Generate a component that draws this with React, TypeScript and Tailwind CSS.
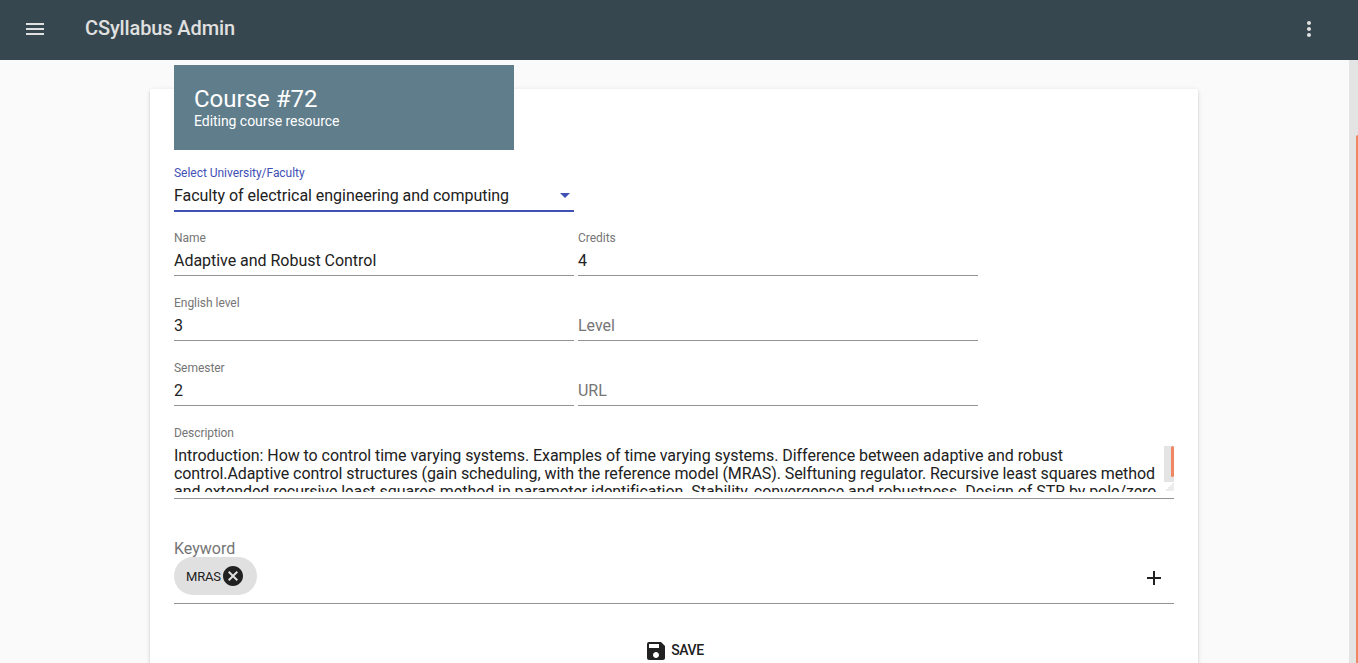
import type { ReactNode } from 'react';
import { MdAdd, MdCancel, MdMenu, MdMoreVert, MdSave } from 'react-icons/md';

const intro =
  'Introduction: How to control time varying systems. Examples of time varying systems. Difference between adaptive and robust ';
const topics =
  'control.Adaptive control structures (gain scheduling, with the reference model (MRAS). Selftuning regulator. Recursive least squares method ';
const methods =
  'and extended recursive least squares method in parameter identification. Stability, convergence and robustness. Design of STR by pole/zero';

type FieldProps = { label: string; value?: string; active?: boolean; children?: ReactNode };

function Field({ label, value, active = false, children }: FieldProps) {
  return (
    <div className="h-[65px] w-[400px] pt-[15px]">
      <div
        className={`h-[21px] text-xs leading-4 tracking-[-0.035px] ${active ? 'text-[#3f51b5]' : 'text-[#757575]'}`}
      >
        {value ? label : ''}
      </div>
      <div
        className={`flex h-6 items-start justify-between text-base leading-[19px] tracking-[-0.03px] ${value ? 'text-[#212121]' : 'text-[#757575]'}`}
      >
        <span>{value ?? label}</span>
        {children}
      </div>
      <div className={active ? 'h-0.5 bg-[#3f51b5]' : 'h-px bg-[#949494]'} />
    </div>
  );
}

function Header() {
  return (
    <header className="flex h-[60px] shrink-0 items-center bg-[#37474f] text-[#e0e0e0]">
      <MdMenu className="mr-[38px] ml-[23px] size-6 translate-y-[-1px]" />
      <h1 className="grow pb-1 text-xl leading-6 font-medium tracking-[-0.12px]">CSyllabus Admin</h1>
      <MdMoreVert className="mr-[37px] size-6 translate-y-[-1px]" />
    </header>
  );
}

export default function App() {
  return (
    <div className="flex h-[663px] w-[1358px] flex-col overflow-hidden bg-[#fafafa] font-[Roboto,sans-serif]">
      <Header />
      <div className="flex min-h-0 grow">
        <main className="grow pt-[29px] pl-[150px]">
          <section className="flow-root h-[640px] w-[1048px] rounded-xs bg-white px-6 shadow-[0_3px_1px_-2px_rgba(0,0,0,.2),0_2px_2px_0_rgba(0,0,0,.14),0_1px_5px_0_rgba(0,0,0,.12)]">
            <div className="-mt-6 h-[85px] w-[340px] bg-[#607d8b] p-5 text-white">
              <h2 className="text-2xl leading-7">Course #72</h2>
              <p className="text-sm leading-4 tracking-[-0.04px]">Editing course resource</p>
            </div>
            <Field label="Select University/Faculty" value="Faculty of electrical engineering and computing" active>
              <svg className="mt-[7px] mr-1 h-[5px] w-2.5" viewBox="0 0 10 5">
                <path d="M0 0h10L5 5z" fill="#3f51b5" />
              </svg>
            </Field>
            <div className="grid grid-cols-[400px_400px] gap-x-1">
              <Field label="Name" value="Adaptive and Robust Control" />
              <Field label="Credits" value="4" />
              <Field label="English level" value="3" />
              <Field label="Level" />
              <Field label="Semester" value="2" />
              <Field label="URL" />
            </div>
            <div className="pt-[15px]">
              <div className="h-[21px] text-xs leading-4 tracking-[-0.08px] text-[#757575]">Description</div>
              <div className="flex h-[46px] overflow-hidden">
                <p className="w-[990px] pt-px text-base leading-[18px] text-[#212121]">
                  <span className="tracking-[-0.05px]">{intro}</span>
                  <span className="tracking-[-0.08px]">{topics}</span>
                  <span className="tracking-[-0.06px]">{methods}</span>
                </p>
                <div className="flex w-2.5 flex-col">
                  <div className="flex h-9 justify-end bg-[#e4e4e4]">
                    <div className="h-[31px] w-[3px] rounded-xs bg-[#f08763]" />
                  </div>
                  <svg className="h-2.5 w-2.5" viewBox="0 0 10 10">
                    <path d="M2 9V7h2V5h2V3h2V1h2v8z" fill="#ececec" />
                  </svg>
                </div>
              </div>
              <div className="mt-1.5 h-px bg-[#949494]" />
            </div>
            <div className="pt-[41px]">
              <div className="h-[17px] text-base leading-[18px] text-[#757575]">Keyword</div>
              <div className="flex h-[47px] items-start justify-between border-b border-[#949494]">
                <div className="flex h-[38px] w-[83px] items-center rounded-full bg-[#e0e0e0] pl-3 text-[13px] tracking-[-0.22px] text-[#212121]">
                  <span className="translate-y-px">MRAS</span>
                  <MdCancel className="size-6 shrink-0" />
                </div>
                <MdAdd className="mt-[9px] mr-2 size-6 text-[#212121]" />
              </div>
            </div>
            <div className="mt-[34px] flex h-6 items-center justify-center text-sm font-medium tracking-[-0.35px] text-[#212121]">
              <MdSave className="mr-[3px] size-6 translate-y-px" />
              SAVE
            </div>
          </section>
        </main>
        <div className="flex w-[9px] shrink-0 justify-end bg-[#e4e4e4] pt-[75px]">
          <div className="w-0.5 rounded-tl-xs bg-[#f08763]" />
        </div>
      </div>
    </div>
  );
}
